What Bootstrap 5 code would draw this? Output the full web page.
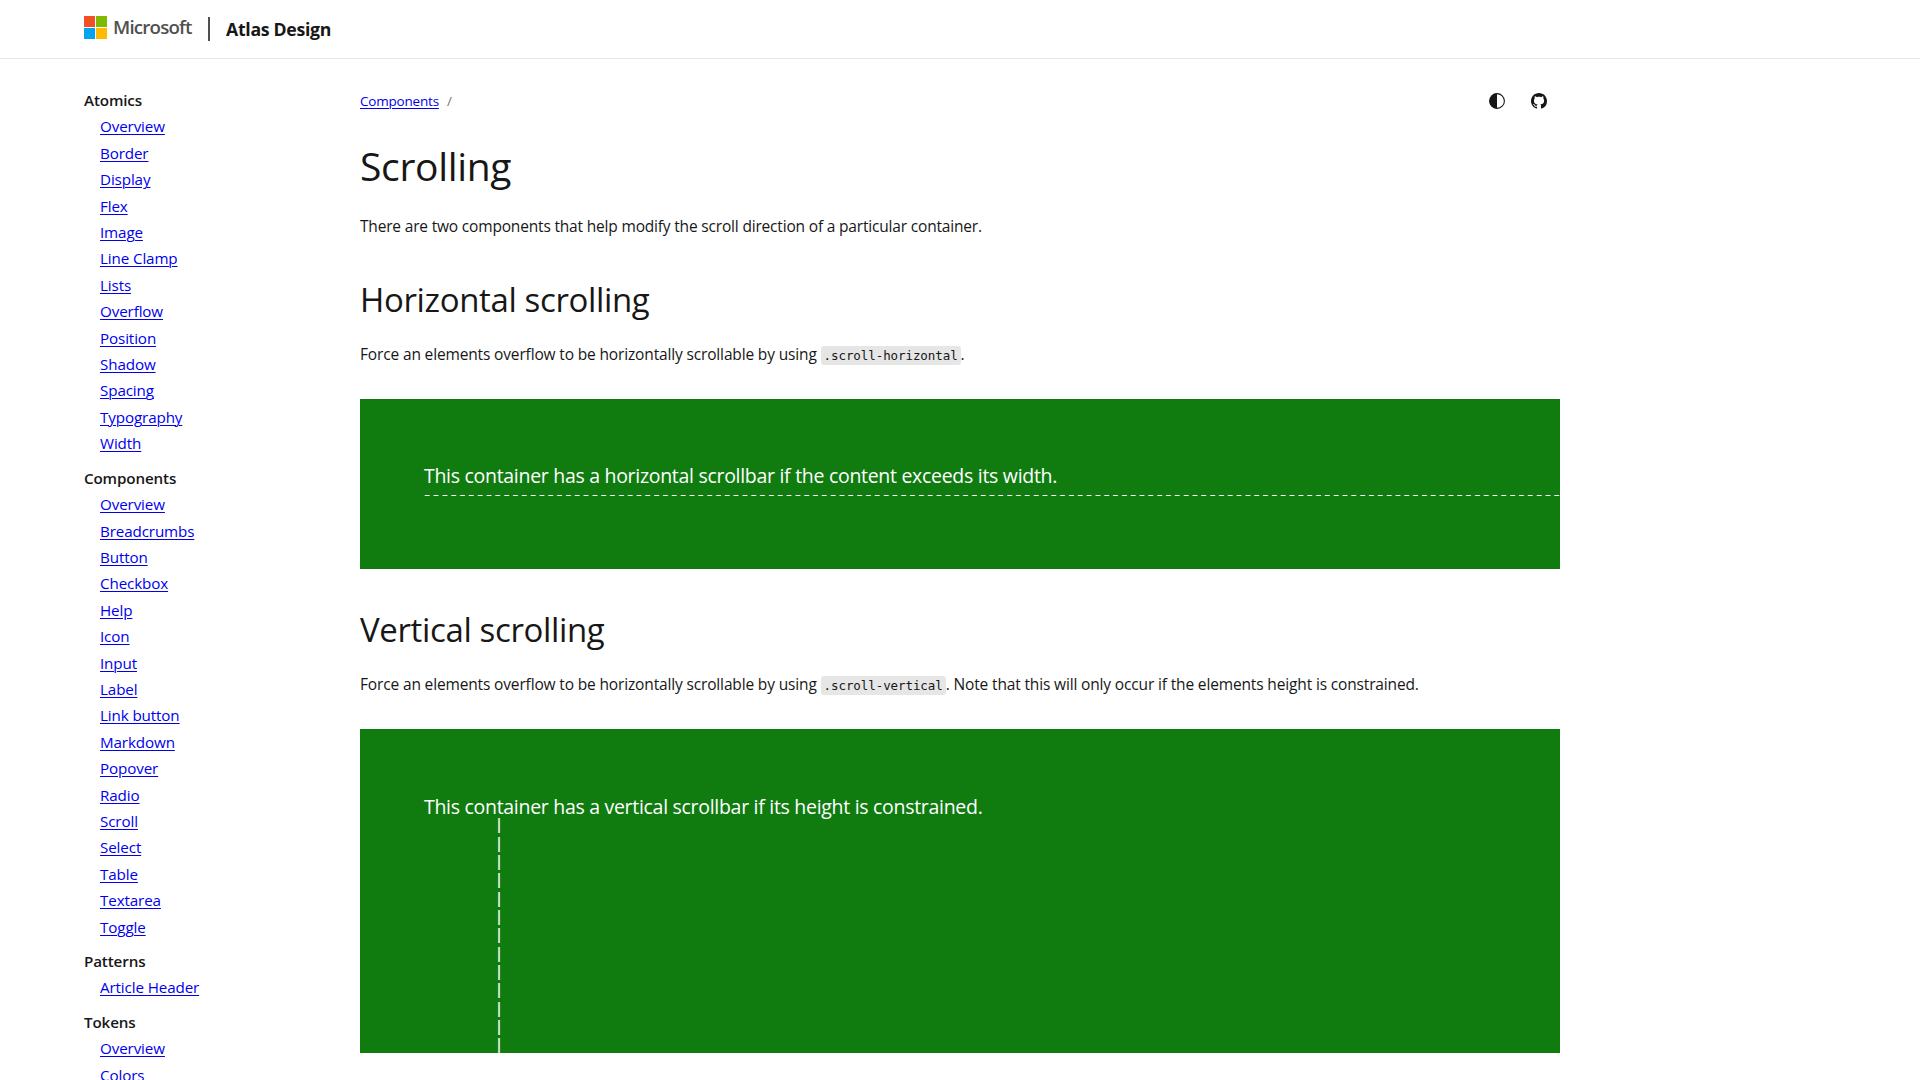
<!DOCTYPE html>
<html lang="en">
<head>
<meta charset="utf-8">
<meta name="viewport" content="width=device-width, initial-scale=1">
<title>Scrolling - Atlas Design</title>
<link href="https://cdn.jsdelivr.net/npm/bootstrap@5.3.0/dist/css/bootstrap.min.css" rel="stylesheet">
<style>
  body { font-family: "Open Sans", "Noto Sans", sans-serif; font-size: 15.5px; color: #171717; height: 100vh; }
  a, a:hover { color: #0000ee; }
  .site-header { height: 59px; padding: 0 84px; border-bottom: 1px solid #e6e6e6; }
  .ms-logo { display: block; width: 23px; height: 23px; margin: -3px 6px 0 0; }
  .ms-word { font-size: 18.7px; font-weight: 600; letter-spacing: -.8px; line-height: 24px; color: #505050; width: 95px; margin-top: -4px; }
  .brand-rule { width: 2px; height: 24px; background: #505050; margin-right: 16px; }
  .site-name { font-size: 17.7px; font-weight: 700; letter-spacing: -.3px; line-height: 24px; margin-top: -1px; color: #171717; }
  .site-nav { width: 360px; padding: 28px 0 0 84px; font-size: 15.2px; letter-spacing: -.12px; line-height: 26.4px; }
  .nav-title { font-size: 15.2px; font-weight: 600; letter-spacing: -.14px; line-height: 26.4px; margin: 0; }
  .site-nav ul { padding-left: 16px; margin-bottom: 8px; }
  .site-nav a, .crumbs a { text-decoration-thickness: 1px; text-underline-offset: 2px; }
  .article { width: 1200px; padding-top: 30px; }
  .crumbs { font-size: 13.5px; letter-spacing: -.2px; line-height: 24px; }
  .crumb-sep { color: #757575; margin-left: 8px; }
  .page-actions { gap: 26px; padding-right: 13px; }
  .page-actions svg { display: block; width: 16px; height: 16px; }
  h1 { font-size: 39px; font-weight: 400; letter-spacing: -.33px; line-height: 52px; margin: 27px 0 22px; }
  h2 { font-size: 33px; font-weight: 400; letter-spacing: -.36px; line-height: 44px; margin: 40px 0 20px; }
  .demo + h2 { margin: 39px 0 20px; }
  .article p { height: 24px; line-height: 24px; letter-spacing: -.15px; margin: 0; }
  .article .intro { letter-spacing: -.18px; }
  code { font: 12.5px/19px "DejaVu Sans Mono", monospace; letter-spacing: -.08px; color: #171717; background: #e6e6e6; border-radius: 3px; padding: 2px 3px; }
  .demo { background: #107c10; color: #fff; margin-top: 33px; padding: 68px 64px 0; font-size: 19.5px; line-height: 18.35px; letter-spacing: -.295px; white-space: nowrap; overflow: hidden; }
  .demo-x { height: 170px; }
  .demo-y { height: 324px; padding-top: 69px; }
  .dashes { letter-spacing: 2.55px; font-weight: 300; }
  .pipes { width: 150px; font-family: "Liberation Sans", sans-serif; font-size: 17px; letter-spacing: 0; }
</style>
<script src="https://cdn.jsdelivr.net/npm/bootstrap@5.3.0/dist/js/bootstrap.bundle.min.js"></script>
</head>
<body class="overflow-hidden bg-white">
<header class="site-header d-flex align-items-center">
  <svg class="ms-logo" viewBox="0 0 23 23" shape-rendering="crispEdges"><path fill="#f25022" d="M0 0h11v11H0z"/><path fill="#7fba00" d="M12 0h11v11H12z"/><path fill="#00a4ef" d="M0 12h11v11H0z"/><path fill="#ffb900" d="M12 12h11v11H12z"/></svg>
  <span class="ms-word">Microsoft</span>
  <span class="brand-rule"></span>
  <span class="site-name">Atlas Design</span>
</header>
<div class="d-flex">
  <nav class="site-nav flex-shrink-0">
    <h3 class="nav-title">Atomics</h3>
    <ul class="list-unstyled">
      <li><a href="#">Overview</a></li><li><a href="#">Border</a></li><li><a href="#">Display</a></li><li><a href="#">Flex</a></li><li><a href="#">Image</a></li><li><a href="#">Line Clamp</a></li><li><a href="#">Lists</a></li><li><a href="#">Overflow</a></li><li><a href="#">Position</a></li><li><a href="#">Shadow</a></li><li><a href="#">Spacing</a></li><li><a href="#">Typography</a></li><li><a href="#">Width</a></li>
    </ul>
    <h3 class="nav-title">Components</h3>
    <ul class="list-unstyled">
      <li><a href="#">Overview</a></li><li><a href="#">Breadcrumbs</a></li><li><a href="#">Button</a></li><li><a href="#">Checkbox</a></li><li><a href="#">Help</a></li><li><a href="#">Icon</a></li><li><a href="#">Input</a></li><li><a href="#">Label</a></li><li><a href="#">Link button</a></li><li><a href="#">Markdown</a></li><li><a href="#">Popover</a></li><li><a href="#">Radio</a></li><li><a href="#">Scroll</a></li><li><a href="#">Select</a></li><li><a href="#">Table</a></li><li><a href="#">Textarea</a></li><li><a href="#">Toggle</a></li>
    </ul>
    <h3 class="nav-title">Patterns</h3>
    <ul class="list-unstyled">
      <li><a href="#">Article Header</a></li>
    </ul>
    <h3 class="nav-title">Tokens</h3>
    <ul class="list-unstyled">
      <li><a href="#">Overview</a></li><li><a href="#">Colors</a></li>
    </ul>
  </nav>
  <main class="article flex-shrink-0">
    <div class="d-flex justify-content-between align-items-center">
      <div class="crumbs"><a href="#">Components</a><span class="crumb-sep">/</span></div>
      <div class="page-actions d-flex">
        <svg viewBox="0 0 16 16"><circle cx="8" cy="8" r="7.4" fill="none" stroke="#171717" stroke-width="1.1"/><path fill="#171717" d="M8 .6a7.4 7.4 0 0 0 0 14.8z"/></svg>
        <svg viewBox="0 0 16 16"><path fill="#171717" d="M8 0C3.58 0 0 3.58 0 8c0 3.54 2.29 6.53 5.47 7.59.4.07.55-.17.55-.38 0-.19-.01-.82-.01-1.49-2.01.37-2.53-.49-2.69-.94-.09-.23-.48-.94-.82-1.13-.28-.15-.68-.52-.01-.53.63-.01 1.08.58 1.23.82.72 1.21 1.87.87 2.33.66.07-.52.28-.87.51-1.07-1.78-.2-3.64-.89-3.64-3.95 0-.87.31-1.59.82-2.15-.08-.2-.36-1.02.08-2.12 0 0 .67-.21 2.2.82.64-.18 1.32-.27 2-.27s1.36.09 2 .27c1.53-1.04 2.2-.82 2.2-.82.44 1.1.16 1.92.08 2.12.51.56.82 1.27.82 2.15 0 3.07-1.87 3.75-3.65 3.95.29.25.54.73.54 1.48 0 1.07-.01 1.93-.01 2.2 0 .21.15.46.55.38A8.01 8.01 0 0 0 16 8c0-4.42-3.58-8-8-8z"/></svg>
      </div>
    </div>
    <h1>Scrolling</h1>
    <p class="intro">There are two components that help modify the scroll direction of a particular container.</p>
    <h2>Horizontal scrolling</h2>
    <p>Force an elements overflow to be horizontally scrollable by using <code>.scroll-horizontal</code>.</p>
    <div class="demo demo-x">
      <div>This container has a horizontal scrollbar if the content exceeds its width.</div>
      <div class="dashes">--------------------------------------------------------------------------------------------------------------------------------------------</div>
    </div>
    <h2>Vertical scrolling</h2>
    <p>Force an elements overflow to be horizontally scrollable by using <code>.scroll-vertical</code>. Note that this will only occur if the elements height is constrained.</p>
    <div class="demo demo-y">
      <div>This container has a vertical scrollbar if its height is constrained.</div>
      <div class="pipes text-center">|<br>|<br>|<br>|<br>|<br>|<br>|<br>|<br>|<br>|<br>|<br>|<br>|</div>
    </div>
  </main>
</div>
</body>
</html>
